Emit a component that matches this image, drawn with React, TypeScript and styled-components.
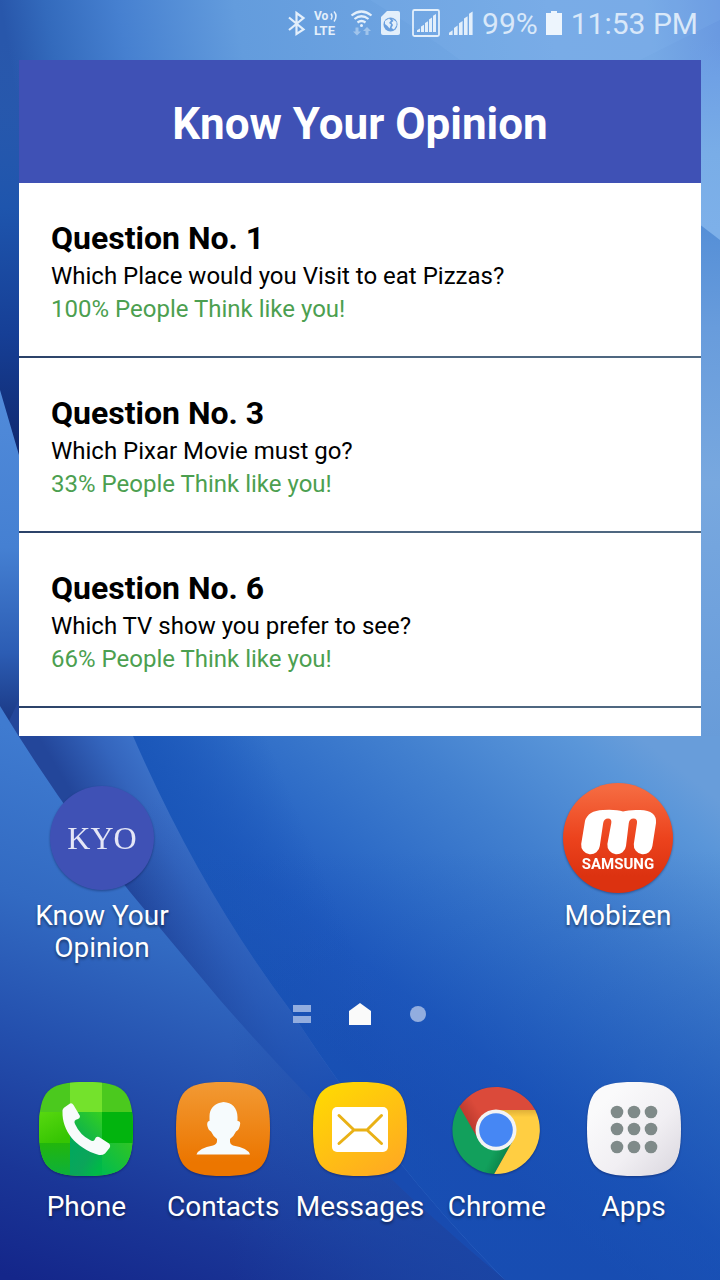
import React from 'react';
import styled, { createGlobalStyle } from 'styled-components';

const GlobalStyle = createGlobalStyle`
  *, *::before, *::after { box-sizing: border-box; }
  body { margin: 0; background: #1b4fae; font-family: Roboto, "Liberation Sans", sans-serif; }
  h1, h2, p, ul { margin: 0; padding: 0; }
`;

const Screen = styled.div`
  position: relative;
  isolation: isolate;
  display: flex;
  flex-direction: column;
  min-height: 100vh;
  overflow: hidden;
`;

const WallpaperSvg = styled.svg`
  position: absolute;
  inset: 0;
  z-index: -1;
  width: 100%;
  height: 100%;
`;

const StatusBar = styled.header`
  display: flex;
  align-items: center;
  justify-content: flex-end;
  gap: 8px;
  height: 48px;
  padding-right: 22px;
  color: #e3effb;
`;

const StatusIcon = styled.svg`
  flex: none;
  height: 48px;
  fill: currentColor;
`;

const StatusText = styled.span`
  font-size: 30px;
  line-height: 48px;
  white-space: nowrap;
  color: #d9e8f9;
`;

const Widget = styled.section`
  margin: 12px 19px 0;
`;

const WidgetTitle = styled.h1`
  padding: 34px 16px 29px;
  background: #3f51b5;
  color: #fff;
  font-size: 44px;
  line-height: 60px;
  font-weight: 700;
  text-align: center;
`;

const QuestionList = styled.ul`
  display: flex;
  flex-direction: column;
  gap: 2px;
  list-style: none;
  background: linear-gradient(90deg, #2a4168, #4a6480 40%, #506880);
`;

const QuestionItem = styled.li`
  padding: 35px 32px 30px;
  background: #fff;
`;

const ListTail = styled.li`
  height: 28px;
  background: #fff;
`;

const QuestionTitle = styled.h2`
  margin-bottom: 1px;
  color: #000;
  font-size: 32px;
  line-height: 41px;
  font-weight: 700;
`;

const QuestionText = styled.p<{ $accent?: boolean }>`
  color: ${(p) => (p.$accent ? '#4c9f50' : '#000')};
  font-size: 24px;
  line-height: 33px;
`;

const ShortcutGrid = styled.nav`
  display: grid;
  grid-template-columns: repeat(4, 1fr);
  padding: 0 16px;
  margin-top: 47px;
`;

const AppButton = styled.button<{ $column?: number; $gap: number }>`
  grid-column: ${(p) => p.$column ?? 'auto'};
  display: flex;
  flex-direction: column;
  align-items: center;
  gap: ${(p) => p.$gap}px;
  padding: 0;
  border: 0;
  background: none;
  color: #fff;
  font: 400 28px/32px Roboto, "Liberation Sans", sans-serif;
  text-shadow: 0 2px 3px rgba(0, 0, 0, 0.45);
  cursor: pointer;
`;

const AppLabel = styled.span<{ $narrow?: boolean }>`
  max-width: ${(p) => (p.$narrow ? '150px' : 'none')};
`;

const AppIcon = styled.svg`
  display: block;
  flex: none;
  text-shadow: none;
  filter: drop-shadow(0 1px 1px rgba(0, 0, 40, 0.35));
`;

const PageIndicator = styled.div`
  display: flex;
  justify-content: center;
  gap: 36px;
  margin-top: 39px;
`;

const PageButton = styled.button`
  width: 22px;
  height: 22px;
  padding: 0;
  border: 0;
  background: none;
  cursor: pointer;
  svg { display: block; }
`;

const Dock = styled.nav`
  display: grid;
  grid-template-columns: repeat(5, 1fr);
  margin-top: 57px;
  padding: 0 18px 57px;
`;

const SQUIRCLE = 'M47 0C85 0 94 9 94 47S85 94 47 94 0 85 0 47 9 0 47 0Z';

const Wallpaper = () => (
  <WallpaperSvg viewBox="0 0 720 1280" preserveAspectRatio="none" aria-hidden="true">
    <defs>
      <linearGradient id="sky" x1="0" y1="0" x2="710" y2="-120" gradientUnits="userSpaceOnUse">
        <stop offset="0" stopColor="#2857ab" />
        <stop offset="0.06" stopColor="#336abc" />
        <stop offset="0.16" stopColor="#4680d0" />
        <stop offset="0.32" stopColor="#639cdd" />
        <stop offset="0.75" stopColor="#76aae5" />
        <stop offset="0.88" stopColor="#76a9e5" />
        <stop offset="1" stopColor="#6796e0" />
      </linearGradient>
      <linearGradient id="rightTop" x1="0" y1="40" x2="0" y2="230" gradientUnits="userSpaceOnUse">
        <stop offset="0" stopColor="#6d9fe5" stopOpacity="0" />
        <stop offset="0.2" stopColor="#6fa1e5" />
        <stop offset="0.6" stopColor="#79ade7" />
        <stop offset="1" stopColor="#7db0e9" />
      </linearGradient>
      <linearGradient id="rightSide" x1="0" y1="225" x2="0" y2="740" gradientUnits="userSpaceOnUse">
        <stop offset="0" stopColor="#558fd7" />
        <stop offset="0.2" stopColor="#689cdc" />
        <stop offset="0.5" stopColor="#78a8df" />
        <stop offset="0.75" stopColor="#70a2dd" />
        <stop offset="1" stopColor="#689cd9" />
      </linearGradient>
      <linearGradient id="edge" x1="0" y1="40" x2="0" y2="460" gradientUnits="userSpaceOnUse">
        <stop offset="0" stopColor="#2a5cb0" stopOpacity="0" />
        <stop offset="0.4" stopColor="#1e55ad" />
        <stop offset="0.7" stopColor="#163f96" />
        <stop offset="1" stopColor="#10276c" />
      </linearGradient>
      <linearGradient id="ribbon" x1="0" y1="390" x2="0" y2="740" gradientUnits="userSpaceOnUse">
        <stop offset="0" stopColor="#518bda" />
        <stop offset="0.45" stopColor="#4580d2" />
        <stop offset="0.75" stopColor="#2c5db4" />
        <stop offset="1" stopColor="#162f78" />
      </linearGradient>
      <linearGradient id="field" x1="260" y1="990" x2="530" y2="650" gradientUnits="userSpaceOnUse">
        <stop offset="0" stopColor="#1c52b8" />
        <stop offset="0.2" stopColor="#1f5abf" />
        <stop offset="0.4" stopColor="#2e6cc7" />
        <stop offset="0.65" stopColor="#4280cf" />
        <stop offset="0.9" stopColor="#5a96d9" />
        <stop offset="1.000" stopColor="#689dda" />
      </linearGradient>
      <linearGradient id="fieldEdge" x1="140" y1="800" x2="270" y2="745" gradientUnits="userSpaceOnUse">
        <stop offset="0.150" stopColor="#1a56b8" stopOpacity="0.900" />
        <stop offset="1" stopColor="#1a56b8" stopOpacity="0" />
      </linearGradient>
      <linearGradient id="floor" x1="0" y1="850" x2="0" y2="1280" gradientUnits="userSpaceOnUse">
        <stop offset="0" stopColor="#1348ac" stopOpacity="0" />
        <stop offset="0.6" stopColor="#1348ac" stopOpacity="0.4" />
        <stop offset="1" stopColor="#1348ac" stopOpacity="0.500" />
      </linearGradient>
      <linearGradient id="fold" x1="115" y1="865" x2="215" y2="805" gradientUnits="userSpaceOnUse">
        <stop offset="0" stopColor="#23469a" />
        <stop offset="0.45" stopColor="#3465bd" />
        <stop offset="1" stopColor="#4580d6" />
      </linearGradient>
      <linearGradient id="foldFade" x1="150" y1="800" x2="350" y2="1120" gradientUnits="userSpaceOnUse">
        <stop offset="0" stopColor="#1d4fb0" stopOpacity="0" />
        <stop offset="0.6" stopColor="#1d4fb0" stopOpacity="0.5" />
        <stop offset="1" stopColor="#184bb0" stopOpacity="1" />
      </linearGradient>
      <linearGradient id="front" x1="190" y1="790" x2="20" y2="1280" gradientUnits="userSpaceOnUse">
        <stop offset="0" stopColor="#3f7bd0" />
        <stop offset="0.3" stopColor="#326ac2" />
        <stop offset="0.55" stopColor="#2450ae" />
        <stop offset="0.8" stopColor="#1a3697" />
        <stop offset="1" stopColor="#14268a" />
      </linearGradient>
      <linearGradient id="frontEnd" x1="230" y1="0" x2="500" y2="0" gradientUnits="userSpaceOnUse">
        <stop offset="0" stopColor="#1a45a4" stopOpacity="0" />
        <stop offset="1" stopColor="#1a45a4" stopOpacity="0.9" />
      </linearGradient>
    </defs>
    <rect width="720" height="700" fill="url(#sky)" />
    <path d="M370 0 Q420 30 460 60 H640 L720 20 V0Z" fill="#8abcf0" opacity="0.16" />
    <path d="M690 40 H720 V242 L690 220Z" fill="url(#rightTop)" />
    <path d="M690 217 L720 240 V750 H690Z" fill="url(#rightSide)" />
    <rect y="40" width="22" height="430" fill="url(#edge)" />
    <path d="M0 390 L19 455 L40 520 V760 H0Z" fill="url(#ribbon)" />
    <path d="M22 736 H720 V1280 H22Z" fill="url(#field)" />
    <path d="M22 736 H720 V1280 H22Z" fill="url(#fieldEdge)" />
    <path d="M22 736 H720 V1280 H22Z" fill="url(#floor)" />
    <path d="M19 700 H118 L133 736 Q200 890 290 1010 Q390 1165 505 1280 H330 L0 740Z" fill="url(#fold)" />
    <path d="M19 700 H118 L133 736 Q200 890 290 1010 Q390 1165 505 1280 H330 L0 740Z" fill="url(#foldFade)" />
    <path d="M0 706 Q60 805 130 892 L220 1000 Q360 1160 505 1280 H0Z" fill="url(#front)" />
    <path d="M220 1000 Q360 1160 505 1280 H200Z" fill="url(#frontEnd)" />
  </WallpaperSvg>
);

const signalBars = (x: number, base: number, step: number, width: number, rise: number) =>
  [0, 1, 2, 3, 4].map((i) => {
    const h = rise * (i + 1);
    return (
      <path key={i} d={`M${x + i * step} ${base}v${-h + rise / 2}l${width} ${-rise / 2}v${h}z`} />
    );
  });

const StatusIcons = () => (
  <>
    <StatusIcon width="18" viewBox="289 0 18 48" role="img" aria-label="Bluetooth">
      <path d="M290 17.500L304.500 29.500L297.500 34V13L304.500 18L290 30" fill="none" stroke="currentColor" strokeWidth="2.200" />
    </StatusIcon>
    <StatusIcon width="25" viewBox="315 0 25 48" role="img" aria-label="VoLTE">
      <text x="315" y="20" fontFamily="Roboto" fontWeight="700" fontSize="12">Vo</text>
      <path d="M332 13.500q2 3 0 6M335 11.500q4 4.500 0 10" fill="none" stroke="currentColor" strokeWidth="1.500" />
      <text x="315" y="35" fontFamily="Roboto" fontWeight="700" fontSize="13">LTE</text>
    </StatusIcon>
    <StatusIcon width="26" viewBox="348 0 26 48" role="img" aria-label="Wi-Fi">
      <path d="M352.500 15.500q10-8 20 0M355.500 19q7-5.500 14 0M358.500 22.500q4-3 8 0" fill="none" stroke="currentColor" strokeWidth="2.200" />
      <circle cx="362.500" cy="25.500" r="1.500" />
      <path d="M358.500 27.500v4h2.500l-4 4-4-4h2.500v-4zM365.500 35v-4h-2.500l4-4 4 4h-2.500v4z" opacity="0.45" transform="translate(1 0)" />
    </StatusIcon>
    <StatusIcon width="21" viewBox="382 0 21 48" role="img" aria-label="SIM data">
      <path d="M388 11h11q2 0 2 2v20q0 2-2 2h-15q-2 0-2-2V17z" />
      <circle cx="391.500" cy="24.500" r="7" fill="#699fdf" />
      <path d="M386 21l4-2.500 2 2-2 2.500 2 1.500-1.500 4-2-2.500-2.500-2zM393 18.500l4.500 3.500v3.500l-2.500 4-2.500-1.500 1.500-3-1.500-2.500 2-1.500z" />
    </StatusIcon>
    <StatusIcon width="30" viewBox="411 0 30 48" role="img" aria-label="Signal, SIM 1">
      <rect x="414" y="10" width="26" height="26" rx="1.500" fill="none" stroke="currentColor" strokeWidth="1.800" />
      {signalBars(418, 32, 4, 3, 3.6)}
    </StatusIcon>
    <StatusIcon width="26" viewBox="449 0 26 48" role="img" aria-label="Signal, SIM 2">
      {signalBars(450, 35, 5, 3.6, 4.7)}
    </StatusIcon>
    <StatusText>99%</StatusText>
    <StatusIcon width="17" viewBox="545 0 17 48" role="img" aria-label="Battery">
      <path d="M545 13h5v-2h6v2h5v22h-16z" fill="#edf5fd" />
    </StatusIcon>
    <StatusText>11:53 PM</StatusText>
  </>
);

const KyoIcon = () => (
  <AppIcon width="110" height="110" viewBox="0 0 110 110" aria-hidden="true">
    <circle cx="55" cy="55" r="52" fill="#3f51b5" />
    <text x="55" y="66" textAnchor="middle" fontFamily="Liberation Serif" fontSize="32" fill="#e4e6f6">KYO</text>
  </AppIcon>
);

const MobizenIcon = () => (
  <AppIcon width="110" height="110" viewBox="0 0 110 110" aria-hidden="true">
    <defs>
      <linearGradient id="mobizen" x2="0" y2="1">
        <stop offset="0.05" stopColor="#f56a40" />
        <stop offset="0.5" stopColor="#ec431d" />
        <stop offset="0.85" stopColor="#dc3210" />
      </linearGradient>
    </defs>
    <circle cx="55" cy="55" r="55" fill="url(#mobizen)" />
    <path
      d="M18.200 61L22 38Q25 27.500 40 27Q53 26.200 60 28.500Q66 26.500 77 27Q94 27.500 93 40L89.400 63A9.300 9.300 0 0 1 70.800 61L74 40Q74.500 35.500 70.500 35.500Q66.500 35.500 65.800 40L63 63A9.300 9.300 0 0 1 44.400 61L48.300 40Q49 35.500 45 35.500Q41 35.500 40.200 40L36.800 63A9.300 9.300 0 0 1 18.200 61Z"
      fill="#fff"
    />
    <text x="55" y="86" textAnchor="middle" fontFamily="Roboto" fontWeight="700" fontSize="15" fill="#fff">SAMSUNG</text>
  </AppIcon>
);

const PhoneIcon = () => (
  <AppIcon width="94" height="94" viewBox="0 0 94 94" aria-hidden="true">
    <defs>
      <clipPath id="phoneClip"><path d={SQUIRCLE} /></clipPath>
      <linearGradient id="tileLeft" x2="0.500" y2="1"><stop stopColor="#58d80f" /><stop offset="1" stopColor="#36c503" /></linearGradient>
      <linearGradient id="tileMid" x1="1" x2="0" y2="1"><stop stopColor="#34d020" /><stop offset="1" stopColor="#00a85c" /></linearGradient>
      <linearGradient id="tileBottomLeft" x2="0" y2="1"><stop stopColor="#22b60c" /><stop offset="1" stopColor="#0cb03c" /></linearGradient>
      <linearGradient id="tileBottom" y2="0.600"><stop stopColor="#00a85e" /><stop offset="0.600" stopColor="#0ba55a" /><stop offset="1" stopColor="#00b948" /></linearGradient>
      <linearGradient id="tileBottomRight" x1="1" x2="0" y2="1"><stop stopColor="#30c524" /><stop offset="1" stopColor="#00bb50" /></linearGradient>
    </defs>
    <g clipPath="url(#phoneClip)">
      <rect width="94" height="94" fill="#4bc91e" />
      <rect x="31" width="32" height="30" fill="#74e22c" />
      <rect y="30" width="31" height="31" fill="url(#tileLeft)" />
      <rect x="31" y="30" width="32" height="31" fill="url(#tileMid)" />
      <rect x="63" y="30" width="31" height="31" fill="#02b40e" />
      <rect y="61" width="31" height="33" fill="url(#tileBottomLeft)" />
      <rect x="31" y="61" width="32" height="33" fill="url(#tileBottom)" />
      <rect x="63" y="61" width="31" height="33" fill="url(#tileBottomRight)" />
    </g>
    <path
      d="M23.500 30Q23 27 26 25L31 21.500Q33 20.500 34.500 23L41 34Q41 36.500 39 37Q34 38 36 42Q41 53 51 58Q54 60 55.500 58Q57 53.500 60 55L70 61.500Q72 63.500 70.500 66L66 71.500Q63.500 73.500 60 73C36 66 23 48 23.500 30Z"
      fill="#f7fbfb"
    />
  </AppIcon>
);

const ContactsIcon = () => (
  <AppIcon width="94" height="94" viewBox="0 0 94 94" aria-hidden="true">
    <defs>
      <linearGradient id="contacts" x2="0" y2="1"><stop stopColor="#f29a34" /><stop offset="0.850" stopColor="#ec7600" /></linearGradient>
    </defs>
    <path d={SQUIRCLE} fill="url(#contacts)" />
    <path
      d="M47.500 20C56 20.500 61.500 26 61.500 35V39Q65 39 64 43Q63 48 60 49.500Q58 54 54 57V60Q54 62 57 63.500Q72 66 74 72.500H20.500Q23 66 37 63.500Q41 62 41 59V57Q37 54 35 49.500Q32 48 31.200 43Q31 39 33.500 39V34C33.500 27 38 22.500 43 21Z"
      fill="#f6fbfd"
    />
  </AppIcon>
);

const MessagesIcon = () => (
  <AppIcon width="94" height="94" viewBox="0 0 94 94" aria-hidden="true">
    <defs>
      <linearGradient id="messages" x2="0.700" y2="1"><stop offset="0.100" stopColor="#ffd803" /><stop offset="1" stopColor="#ffac20" /></linearGradient>
    </defs>
    <path d={SQUIRCLE} fill="url(#messages)" />
    <rect x="19" y="25" width="56" height="45" rx="5" fill="#fff" />
    <path d="M26 33.500L41 48L26 61.500M68.500 33.500L54 48L68.500 61.500M41 48H54" fill="none" stroke="#e9b116" strokeWidth="3" strokeLinecap="round" strokeLinejoin="round" />
  </AppIcon>
);

const ChromeIcon = () => (
  <AppIcon width="94" height="94" viewBox="0 0 94 94" aria-hidden="true">
    <defs>
      <linearGradient id="redShade" x1="12" y1="50" x2="34" y2="36" gradientUnits="userSpaceOnUse"><stop offset="0.300" stopColor="#b8382c" /><stop offset="1" stopColor="#db4a3a" /></linearGradient>
      <linearGradient id="yellowShade" x1="0" y1="28" x2="0" y2="40" gradientUnits="userSpaceOnUse"><stop stopColor="#e0b038" /><stop offset="0.600" stopColor="#ffce42" /></linearGradient>
      <linearGradient id="greenShade" x1="62" y1="72" x2="46" y2="64" gradientUnits="userSpaceOnUse"><stop stopColor="#0b7c44" /><stop offset="1" stopColor="#12a05c" /></linearGradient>
    </defs>
    <path d="M44.200 92A44.300 44.300 0 0 1 10 23L28.700 58H63.300Z" fill="url(#greenShade)" />
    <path d="M85.200 28A44.300 44.300 0 0 1 44.200 92L63.300 58L46 28Z" fill="url(#yellowShade)" />
    <path d="M9.500 24.500A44.300 44.300 0 0 1 85.200 28H46L28.700 58Z" fill="url(#redShade)" />
    <circle cx="46" cy="48" r="20.500" fill="#f3f3f3" />
    <circle cx="46" cy="48" r="16.800" fill="#4687f4" />
  </AppIcon>
);

const AppsIcon = () => (
  <AppIcon width="94" height="94" viewBox="0 0 94 94" aria-hidden="true">
    <defs>
      <linearGradient id="apps" x2="1" y2="1"><stop offset="0.200" stopColor="#fafafb" /><stop offset="0.600" stopColor="#f1eff3" /><stop offset="0.900" stopColor="#dfdce3" /></linearGradient>
    </defs>
    <path d={SQUIRCLE} fill="url(#apps)" />
    {[30, 47, 65].map((cy) => [30, 47, 64].map((cx) => <circle key={`${cx}-${cy}`} cx={cx} cy={cy} r="6.300" fill="#7f8a89" />))}
  </AppIcon>
);

const questions = [
  { number: 1, text: 'Which Place would you Visit to eat Pizzas?', percent: 100 },
  { number: 3, text: 'Which Pixar Movie must go?', percent: 33 },
  { number: 6, text: 'Which TV show you prefer to see?', percent: 66 },
];

const dockApps = [
  { label: 'Phone', Icon: PhoneIcon },
  { label: 'Contacts', Icon: ContactsIcon },
  { label: 'Messages', Icon: MessagesIcon },
  { label: 'Chrome', Icon: ChromeIcon },
  { label: 'Apps', Icon: AppsIcon },
];

export default function App() {
  return (
    <Screen>
      <GlobalStyle />
      <Wallpaper />
      <StatusBar>
        <StatusIcons />
      </StatusBar>
      <main>
        <Widget>
          <WidgetTitle>Know Your Opinion</WidgetTitle>
          <QuestionList>
            {questions.map((q) => (
              <QuestionItem key={q.number}>
                <QuestionTitle>Question No. {q.number}</QuestionTitle>
                <QuestionText>{q.text}</QuestionText>
                <QuestionText $accent>{q.percent}% People Think like you!</QuestionText>
              </QuestionItem>
            ))}
            <ListTail aria-hidden="true" />
          </QuestionList>
        </Widget>
        <ShortcutGrid aria-label="Home shortcuts">
          <AppButton $column={1} $gap={7}>
            <KyoIcon />
            <AppLabel $narrow>Know Your Opinion</AppLabel>
          </AppButton>
          <AppButton $column={4} $gap={7}>
            <MobizenIcon />
            <AppLabel>Mobizen</AppLabel>
          </AppButton>
        </ShortcutGrid>
        <PageIndicator>
          <PageButton aria-label="Briefing page">
            <svg width="22" height="22" viewBox="0 0 22 22" fill="#92addf"><path d="M2 2h18v7H2zM2 13h18v7H2z" /></svg>
          </PageButton>
          <PageButton aria-label="Home page" aria-current="page">
            <svg width="22" height="22" viewBox="0 0 22 22" fill="#fafafa"><path d="M11 0L22 8V22H0V8Z" /></svg>
          </PageButton>
          <PageButton aria-label="Page 2">
            <svg width="22" height="22" viewBox="0 0 22 22" fill="#92addf"><circle cx="11" cy="11" r="8" /></svg>
          </PageButton>
        </PageIndicator>
        <Dock aria-label="Dock">
          {dockApps.map(({ label, Icon }) => (
            <AppButton key={label} $gap={15}>
              <Icon />
              <AppLabel>{label}</AppLabel>
            </AppButton>
          ))}
        </Dock>
      </main>
    </Screen>
  );
}
